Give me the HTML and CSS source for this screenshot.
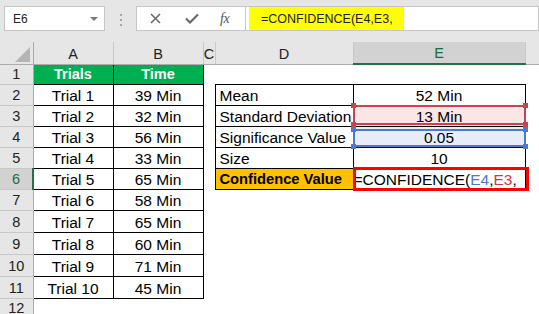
FILE: index.html
```html
<!DOCTYPE html>
<html lang="en">
<head>
    <meta charset="UTF-8">
    <meta name="viewport" content="width=device-width, initial-scale=1.0">
    <title>Confidence Value</title>
    <link rel="stylesheet" href="styles.css">
</head>
<body>
    <div class="toolbar">
        <div class="name-box">
            <span>E6</span>
            <span class="arrow"></span>
        </div>
        <div class="grip"><span></span><span></span><span></span></div>
        <div class="fx-box">
            <svg class="icon-x" width="11" height="11" viewBox="0 0 11 11">
                <path d="M1 1 L10 10 M10 1 L1 10" stroke="#6b6b6b" stroke-width="1.6" fill="none"/>
            </svg>
            <svg class="icon-ok" width="14" height="11" viewBox="0 0 14 11">
                <path d="M1 5.5 L5 9.5 L13 1.5" stroke="#6b6b6b" stroke-width="2.2" fill="none"/>
            </svg>
            <span class="fx">fx</span>
        </div>
        <div class="formula">
            <span class="formula-text">=CONFIDENCE(E4,E3,</span>
        </div>
    </div>

    <table class="sheet">
        <colgroup>
            <col class="col-rh">
            <col class="col-a">
            <col class="col-b">
            <col class="col-c">
            <col class="col-d">
            <col class="col-e">
            <col class="col-f">
        </colgroup>
        <tr class="row-head">
            <th class="corner">
                <svg width="15" height="15" viewBox="0 0 15 15"><polygon points="15,0 15,15 0,15" fill="#b4b4b4"/></svg>
            </th>
            <th class="col-hd">A</th>
            <th class="col-hd">B</th>
            <th class="col-hd">C</th>
            <th class="col-hd">D</th>
            <th class="col-hd selected">E</th>
            <th class="col-hd last"></th>
        </tr>
        <tr class="r-short">
            <th class="row-hd">1</th>
            <td class="cell green">Trials</td>
            <td class="cell green">Time</td>
            <td></td><td></td><td></td><td></td>
        </tr>
        <tr>
            <th class="row-hd">2</th>
            <td class="cell">Trial 1</td>
            <td class="cell">39 Min</td>
            <td></td>
            <td class="cell label">Mean</td>
            <td class="cell">52 Min</td>
            <td></td>
        </tr>
        <tr>
            <th class="row-hd">3</th>
            <td class="cell">Trial 2</td>
            <td class="cell">32 Min</td>
            <td></td>
            <td class="cell label">Standard Deviation</td>
            <td class="cell ref ref-red">13 Min</td>
            <td></td>
        </tr>
        <tr>
            <th class="row-hd">4</th>
            <td class="cell">Trial 3</td>
            <td class="cell">56 Min</td>
            <td></td>
            <td class="cell label">Significance Value</td>
            <td class="cell ref ref-blue">0.05</td>
            <td></td>
        </tr>
        <tr>
            <th class="row-hd">5</th>
            <td class="cell">Trial 4</td>
            <td class="cell">33 Min</td>
            <td></td>
            <td class="cell label">Size</td>
            <td class="cell">10</td>
            <td></td>
        </tr>
        <tr>
            <th class="row-hd selected">6</th>
            <td class="cell">Trial 5</td>
            <td class="cell">65 Min</td>
            <td></td>
            <td class="cell label orange">Confidence Value</td>
            <td class="cell editing">=CONFIDENCE(<span class="blue">E4</span>,<span class="red">E3</span>,</td>
            <td></td>
        </tr>
        <tr>
            <th class="row-hd">7</th>
            <td class="cell">Trial 6</td>
            <td class="cell">58 Min</td>
            <td></td><td></td><td></td><td></td>
        </tr>
        <tr class="r-tall">
            <th class="row-hd">8</th>
            <td class="cell">Trial 7</td>
            <td class="cell">65 Min</td>
            <td></td><td></td><td></td><td></td>
        </tr>
        <tr class="r-tall">
            <th class="row-hd">9</th>
            <td class="cell">Trial 8</td>
            <td class="cell">60 Min</td>
            <td></td><td></td><td></td><td></td>
        </tr>
        <tr class="r-tall">
            <th class="row-hd">10</th>
            <td class="cell">Trial 9</td>
            <td class="cell">71 Min</td>
            <td></td><td></td><td></td><td></td>
        </tr>
        <tr class="r-tall">
            <th class="row-hd">11</th>
            <td class="cell">Trial 10</td>
            <td class="cell">45 Min</td>
            <td></td><td></td><td></td><td></td>
        </tr>
        <tr class="r-last">
            <th class="row-hd">12</th>
            <td></td><td></td><td></td><td></td><td></td><td></td>
        </tr>
    </table>
</body>
</html>
```

FILE: styles.css
```css
body {
    margin: 0;
    width: 539px;
    height: 314px;
    overflow: hidden;
    background: #fff;
    font-family: "Liberation Sans", Arial, sans-serif;
    color: #000;
}

/* formula bar */
.toolbar {
    height: 42px;
    box-sizing: border-box;
    padding-top: 6px;
    background: #e6e6e6;
    display: flex;
    align-items: flex-start;
}
.name-box {
    margin-left: 4px;
    width: 101px;
    height: 25px;
    box-sizing: border-box;
    background: #fff;
    border: 1px solid #c6c6c6;
    display: flex;
    align-items: center;
    justify-content: space-between;
    padding: 0 6px 0 8px;
    font-size: 12px;
    color: #222;
}
.name-box .arrow {
    width: 0;
    height: 0;
    border-left: 4px solid transparent;
    border-right: 4px solid transparent;
    border-top: 4px solid #7a7a7a;
}
.grip {
    margin: 8px 0 0 15px;
    width: 2px;
    display: flex;
    flex-direction: column;
    gap: 3px;
}
.grip span {
    width: 2px;
    height: 2px;
    background: #a6a6a6;
}
.fx-box {
    margin-left: 14px;
    width: 110px;
    height: 25px;
    box-sizing: border-box;
    background: #fff;
    border: 1px solid #c6c6c6;
    display: flex;
    align-items: center;
    padding-left: 13px;
}
.icon-ok {
    margin-left: 24px;
}
.fx {
    margin-left: 21px;
    font-family: "Liberation Serif", serif;
    font-style: italic;
    font-size: 14px;
    color: #555;
    letter-spacing: -0.5px;
}
.formula {
    flex: 1;
    height: 25px;
    box-sizing: border-box;
    background: #fff;
    border: 1px solid #c6c6c6;
    border-left: none;
    padding-left: 3px;
}
.formula-text {
    display: inline-flex;
    align-items: center;
    height: 100%;
    background: #ffff00;
    padding: 0 11px 0 12px;
    font-size: 12.5px;
    color: #222;
}

/* sheet */
.sheet {
    border-collapse: collapse;
    table-layout: fixed;
    width: 539px;
    font-size: 15.5px;
}
.col-rh { width: 33px; }
.col-a { width: 80px; }
.col-b { width: 90px; }
.col-c { width: 12px; }
.col-d { width: 138px; }
.col-e { width: 172px; }
.col-f { width: 14px; }

.sheet tr { height: 21px; }
.sheet tr.row-head { height: 22px; }
.sheet tr.r-short { height: 19px; }
.sheet tr.r-tall { height: 22px; }
.sheet tr.r-last { height: 18px; }

.sheet th, .sheet td {
    padding: 0;
    line-height: 19px;
    vertical-align: bottom;
    white-space: nowrap;
    overflow: visible;
}
.corner {
    background: #e6e6e6;
    border-right: 1px solid #ababab;
    border-bottom: 1px solid #ababab;
    text-align: right;
    vertical-align: bottom;
}
.corner svg {
    display: block;
    margin: 0 3px 2px auto;
}
.col-hd {
    background: #e6e6e6;
    border-right: 1px solid #c8c8c8;
    border-bottom: 1px solid #ababab;
    font-weight: normal;
    font-size: 14.5px;
    color: #222;
    vertical-align: middle;
}
.col-hd.selected {
    background: #d2d2d2;
    color: #1e6b40;
    border-bottom: 2px solid #217346;
}
.col-hd.last {
    border-right: none;
}
.row-hd {
    background: #e6e6e6;
    border-right: 1px solid #ababab;
    border-bottom: 1px solid #c8c8c8;
    font-weight: normal;
    font-size: 14.5px;
    color: #222;
}
.r-last .row-hd {
    border-bottom: none;
}
.row-hd.selected {
    background: #d2d2d2;
    color: #1e6b40;
    border-right: 2px solid #217346;
}

.cell {
    border: 1px solid #000;
    text-align: center;
}
.cell.green {
    background: #00b050;
    color: #fff;
    font-weight: bold;
    font-size: 14.5px;
}
.cell.label {
    text-align: left;
    padding-left: 4px;
}
.cell.orange {
    background: #ffc000;
    font-weight: bold;
    font-size: 14.7px;
}

/* formula reference highlights */
.ref {
    position: relative;
}
.ref::before,
.ref::after {
    content: "";
    position: absolute;
    left: -1px;
    right: -1px;
    top: -1px;
    bottom: 1px;
}
.ref::before {
    border: 2px solid currentColor;
}
.ref::after {
    left: -3px;
    right: -3px;
    top: -3px;
    bottom: -1px;
    background:
        linear-gradient(currentColor, currentColor) left top / 5px 5px no-repeat,
        linear-gradient(currentColor, currentColor) right top / 5px 5px no-repeat,
        linear-gradient(currentColor, currentColor) left bottom / 5px 5px no-repeat,
        linear-gradient(currentColor, currentColor) right bottom / 5px 5px no-repeat;
}
.ref-blue::before {
    top: 2px;
    bottom: 0;
}
.ref-blue::after {
    top: 0;
    bottom: -2px;
}
.ref-red {
    background: #fae6e7;
    color: #c9424c;
}
.ref-blue {
    background: #e6edf8;
    color: #4a7bd0;
}
.ref-red, .ref-blue {
    -webkit-text-fill-color: #000;
}

.editing {
    position: relative;
    text-align: left;
    padding-left: 6px;
}
.editing::after {
    content: "";
    position: absolute;
    left: -1px;
    right: -4px;
    top: -2px;
    bottom: -2px;
    border: 3px solid #ff0000;
}
.editing .blue { color: #4a7bd0; }
.editing .red { color: #d0364a; }
```
